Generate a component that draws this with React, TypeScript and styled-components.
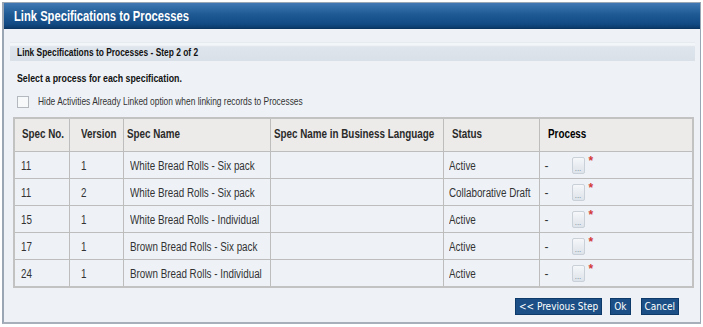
import styled, { createGlobalStyle } from 'styled-components';

const GlobalStyle = createGlobalStyle`
  html, body {
    margin: 0;
    padding: 0;
    background: #fff;
    font-family: "Liberation Sans", Arial, sans-serif;
  }
`;

// the screenshot text is narrower than Arial; squeeze it horizontally
const Narrow = styled.span<{ $scale?: number }>`
  display: inline-block;
  white-space: nowrap;
  transform: scaleX(${({ $scale }) => $scale ?? 0.8});
  transform-origin: left center;
`;

const Page = styled.div`
  padding: 2px 3px 0 2px;
`;
const Dialog = styled.div`
  width: 696px;
  height: 319px;
  border: 1px solid #9aa6b3;
  border-left-width: 2px;
  border-bottom: 2px solid #a7b0ba;
  background: #eef2f7;
  display: flex;
  flex-direction: column;
  overflow: hidden;
`;
const TitleBar = styled.div`
  flex-shrink: 0;
  height: 25px;
  padding: 0 10px;
  display: flex;
  align-items: center;
  color: #fff;
  font-size: 14px;
  font-weight: bold;
  background: linear-gradient(#4079b3 0%, #1f5a95 45%, #124a84 85%, #0b3a6a 100%);
  border-bottom: 1px solid #0a3562;
`;
const Body = styled.div`
  flex: 1;
  display: flex;
  flex-direction: column;
  padding: 13px 5px 0 6px;
`;
const StepHeader = styled.div`
  flex-shrink: 0;
  height: 18px;
  display: flex;
  align-items: center;
  padding-left: 7px;
  font-size: 10.5px;
  font-weight: bold;
  color: #111;
  background: linear-gradient(#f3f6f9 0%, #f3f6f9 12%, #dfe5ec 20%, #d9e0e8 100%);
  border-top: 1px solid #e6ebf0;
`;
const Instruction = styled.div`
  margin: 11px 0 0 7px;
  font-size: 11px;
  line-height: 13px;
  font-weight: bold;
  color: #111;
`;
const CheckRow = styled.label`
  display: flex;
  align-items: center;
  margin: 10px 0 0 7px;
  font-size: 10.5px;
  line-height: 13px;
  color: #333;
`;
const CheckBox = styled.span`
  width: 10px;
  height: 10px;
  border: 1px solid #b4b9bf;
  background: #f7f8fa;
  margin-right: 9px;
`;
const Table = styled.table`
  flex-shrink: 0;
  margin: 9px 0 0 3px;
  width: 681px;
  border-collapse: collapse;
  border: 2px solid #c2c2c2;
  table-layout: fixed;
  font-size: 12px;
  color: #333;
`;
const HeadCell = styled.th<{ $pad?: number; $dark?: boolean }>`
  height: 30px;
  background: #ecebe9;
  border: 1px solid #bdbdbd;
  text-align: left;
  font-weight: bold;
  font-size: 12px;
  white-space: nowrap;
  color: ${({ $dark }) => ($dark ? '#000' : '#2a2a2a')};
  padding: 0 0 2px ${({ $pad }) => $pad ?? 7}px;
`;
const Cell = styled.td<{ $pad?: number }>`
  height: 24px;
  border: 1px solid #bdbdbd;
  padding: 2px 0 0 ${({ $pad }) => $pad ?? 6}px;
  white-space: nowrap;
`;
const ProcessWrap = styled.div`
  display: flex;
  align-items: center;
`;
const Dash = styled.span`
  width: 27px;
`;
const PickButton = styled.span`
  width: 11px;
  height: 15px;
  border: 1px solid #c9d0d8;
  border-radius: 2px;
  background: linear-gradient(#f5f7f9, #dde3ea);
  display: flex;
  align-items: flex-end;
  justify-content: center;
  font-size: 8px;
  line-height: 8px;
  color: #6f7f90;
  margin-bottom: 2px;
`;
const Required = styled.span`
  color: #d23a3a;
  font-size: 12px;
  font-weight: bold;
  margin: 0 0 10px 4px;
`;
const Footer = styled.div`
  display: flex;
  justify-content: flex-end;
  gap: 8px;
  padding: 10px 16px 0 0;
`;
const Button = styled.button<{ $gap?: number }>`
  height: 17px;
  padding: 0 3px;
  margin-left: ${({ $gap }) => $gap ?? 0}px;
  border: 1px solid #0d3a68;
  background: #1b4f85;
  color: #fff;
  font-family: "DejaVu Sans Condensed", "DejaVu Sans", sans-serif;
  font-size: 10px;
  line-height: 15px;
`;

const rows = [
  { no: '11', ver: '1', name: 'White Bread Rolls - Six pack', status: 'Active' },
  { no: '11', ver: '2', name: 'White Bread Rolls - Six pack', status: 'Collaborative Draft' },
  { no: '15', ver: '1', name: 'White Bread Rolls - Individual', status: 'Active' },
  { no: '17', ver: '1', name: 'Brown Bread Rolls - Six pack', status: 'Active' },
  { no: '24', ver: '1', name: 'Brown Bread Rolls - Individual', status: 'Active' },
];

const App = () => {
  return (
    <Page>
      <GlobalStyle />
      <Dialog>
        <TitleBar>
          <Narrow>Link Specifications to Processes</Narrow>
        </TitleBar>
        <Body>
          <StepHeader>
            <Narrow>Link Specifications to Processes - Step 2 of 2</Narrow>
          </StepHeader>
          <Instruction>
            <Narrow>Select a process for each specification.</Narrow>
          </Instruction>
          <CheckRow>
            <CheckBox />
            <Narrow>Hide Activities Already Linked option when linking records to Processes</Narrow>
          </CheckRow>
          <Table>
            <colgroup>
              <col style={{ width: 55 }} />
              <col style={{ width: 54 }} />
              <col style={{ width: 147 }} />
              <col style={{ width: 173 }} />
              <col style={{ width: 96 }} />
              <col />
            </colgroup>
            <thead>
              <tr>
                <HeadCell><Narrow $scale={0.82}>Spec No.</Narrow></HeadCell>
                <HeadCell $pad={11}><Narrow $scale={0.82}>Version</Narrow></HeadCell>
                <HeadCell $pad={3}><Narrow $scale={0.82}>Spec Name</Narrow></HeadCell>
                <HeadCell $pad={3}><Narrow $scale={0.82}>Spec Name in Business Language</Narrow></HeadCell>
                <HeadCell $pad={8}><Narrow $scale={0.82}>Status</Narrow></HeadCell>
                <HeadCell $pad={8} $dark><Narrow $scale={0.82}>Process</Narrow></HeadCell>
              </tr>
            </thead>
            <tbody>
              {rows.map((r, i) => (
                <tr key={i}>
                  <Cell><Narrow $scale={0.82}>{r.no}</Narrow></Cell>
                  <Cell $pad={11}><Narrow $scale={0.82}>{r.ver}</Narrow></Cell>
                  <Cell><Narrow $scale={0.82}>{r.name}</Narrow></Cell>
                  <Cell />
                  <Cell $pad={5}><Narrow $scale={0.82}>{r.status}</Narrow></Cell>
                  <Cell $pad={5}>
                    <ProcessWrap>
                      <Dash>-</Dash>
                      <PickButton>...</PickButton>
                      <Required>*</Required>
                    </ProcessWrap>
                  </Cell>
                </tr>
              ))}
            </tbody>
          </Table>
          <Footer>
            <Button>&lt;&lt; Previous Step</Button>
            <Button>Ok</Button>
            <Button $gap={2}>Cancel</Button>
          </Footer>
        </Body>
      </Dialog>
    </Page>
  );
};

export default App;
